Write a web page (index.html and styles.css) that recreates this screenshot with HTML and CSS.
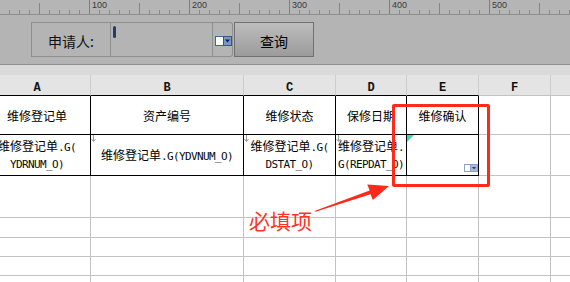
FILE: index.html
```html
<!DOCTYPE html>
<html lang="zh">
<head>
<meta charset="utf-8">
<link rel="stylesheet" href="styles.css">
</head>
<body>
<div class="ruler">
  <div class="seg"></div>
  <div class="seg"><span class="rl">100</span></div>
  <div class="seg"><span class="rl">200</span></div>
  <div class="seg"><span class="rl">300</span></div>
  <div class="seg"><span class="rl">400</span></div>
  <div class="seg"><span class="rl">500</span></div>
  <div class="seg"></div>
</div>
<div class="toolbar">
  <div class="field-label">申请人:</div>
  <div class="field-input"><span class="caret"></span></div>
  <div class="dd">
    <svg width="17" height="10" viewBox="0 0 17 10"><rect x="0.5" y="0.5" width="8" height="9" fill="#fff" stroke="#44659a"/><rect x="8.5" y="0.5" width="8" height="9" fill="#7b98c2" stroke="#34568a"/><path d="M10 3.5h5l-2.5 3z" fill="#0d1f5c"/></svg>
  </div>
  <button class="btn">查询</button>
</div>
<div class="band"></div>
<div class="sheet">
  <div class="ch bk">A</div>
  <div class="ch bk">B</div>
  <div class="ch bk">C</div>
  <div class="ch bk">D</div>
  <div class="ch bk">E</div>
  <div class="ch">F</div>
  <div class="ch"></div>

  <div class="c b"><span class="t">维修登记单</span></div>
  <div class="c b"><span class="t">资产编号</span></div>
  <div class="c b"><span class="t">维修状态</span></div>
  <div class="c b"><span class="t">保修日期</span></div>
  <div class="c b"><span class="t">维修确认</span></div>
  <div class="c"></div>
  <div class="c"></div>

  <div class="c b"><span class="t">维修登记单<span class="m">.G(</span><br><span class="m">YDRNUM_O)</span></span></div>
  <div class="c b"><svg class="mark" width="5" height="7" viewBox="0 0 5 7"><path d="M2.5 0v6M0.5 4l2 2.5 2-2.5" fill="none" stroke="#9a9a9a"/></svg><span class="t">维修登记单<span class="m">.G(YDVNUM_O)</span></span></div>
  <div class="c b"><svg class="mark" width="5" height="7" viewBox="0 0 5 7"><path d="M2.5 0v6M0.5 4l2 2.5 2-2.5" fill="none" stroke="#9a9a9a"/></svg><span class="t">维修登记单<span class="m">.G(</span><br><span class="m">DSTAT_O)</span></span></div>
  <div class="c b"><svg class="mark" width="5" height="7" viewBox="0 0 5 7"><path d="M2.5 0v6M0.5 4l2 2.5 2-2.5" fill="none" stroke="#9a9a9a"/></svg><span class="t">维修登记单<span class="m">.</span><br><span class="m">G(REPDAT_O)</span></span></div>
  <div class="c b">
    <span class="tri"></span>
    <svg class="ddmini" width="14" height="8" viewBox="0 0 14 8"><rect x="0.5" y="0.5" width="6" height="7" fill="#fff" stroke="#8aa2c6"/><rect x="6.5" y="0.5" width="7" height="7" fill="#a9bbd8" stroke="#8aa2c6"/><path d="M8 3h4l-2 2.5z" fill="#2c3f70"/></svg>
  </div>
  <div class="c"></div>
  <div class="c"></div>

  <div class="c"></div><div class="c"></div><div class="c"></div><div class="c"></div><div class="c"></div><div class="c"></div><div class="c"></div>
  <div class="c"></div><div class="c"></div><div class="c"></div><div class="c"></div><div class="c"></div><div class="c"></div><div class="c"></div>
  <div class="c"></div><div class="c"></div><div class="c"></div><div class="c"></div><div class="c"></div><div class="c"></div><div class="c"></div>
  <div class="c"></div><div class="c"></div><div class="c"></div><div class="c"></div><div class="c"></div><div class="c"></div><div class="c"></div>
  <div class="c"></div><div class="c"></div><div class="c"></div><div class="c"></div><div class="c"></div><div class="c"></div><div class="c"></div>
</div>

<div class="redbox"></div>
<svg class="arrow" width="570" height="282" viewBox="0 0 570 282"><polygon points="314.5,211 369.6,190.6 367.3,184.4 389,186 372.8,200 370.6,194.2 315.5,211.8" fill="#ff2a1a"/></svg>
<div class="note">必填项</div>
</body>
</html>
```

FILE: styles.css
```css
html, body {
  margin: 0;
  padding: 0;
}
body {
  width: 570px;
  height: 282px;
  overflow: hidden;
  background: #fff;
  font-family: "Noto Sans CJK SC", "Liberation Sans", sans-serif;
  color: #000;
  position: relative;
}

/* ruler */
.ruler {
  display: flex;
  margin-left: -10px;
  height: 14px;
  border-bottom: 1px solid #8e8e8e;
  background: #b5b5b5;
  overflow: hidden;
}
.seg {
  flex: 0 0 100px;
  box-sizing: border-box;
  height: 14px;
  border-right: 1px solid #7e7e7e;
  background-image:
    linear-gradient(#858585, #858585),
    repeating-linear-gradient(to right, transparent 0 9px, #8a8a8a 9px 10px);
  background-size: 1px 11px, 100% 4px;
  background-position: 49px 100%, 0 100%;
  background-repeat: no-repeat;
}
.rl {
  display: block;
  padding-left: 2px;
  font-family: "Liberation Sans", sans-serif;
  font-size: 9px;
  line-height: 10px;
  color: #3a3a3a;
}

/* toolbar */
.toolbar {
  display: flex;
  align-items: flex-start;
  height: 50px;
  box-sizing: border-box;
  padding: 7px 0 0 31px;
  background: #b4b4b4;
  border-bottom: 1px solid #8f8f8f;
}
.field-label {
  width: 80px;
  height: 35px;
  box-sizing: border-box;
  border: 1px solid #8f8f8f;
  display: flex;
  align-items: center;
  justify-content: center;
  padding-top: 2px;
  font-size: 14px;
  line-height: 16px;
  color: #111;
}
.field-input {
  width: 102px;
  height: 35px;
  box-sizing: border-box;
  border: 1px solid #8f8f8f;
  border-left: none;
  padding: 3px 0 0 2px;
}
.caret {
  display: block;
  width: 3px;
  height: 12px;
  border-radius: 1.5px;
  background: #1d3f6c;
}
.dd {
  width: 20px;
  height: 35px;
  box-sizing: border-box;
  border: 1px solid #8f8f8f;
  border-left: none;
  border-radius: 0 3px 3px 0;
  display: flex;
  align-items: center;
  justify-content: center;
  padding: 3px 0 0 1px;
}
.btn {
  margin: 0 0 0 1px;
  width: 80px;
  height: 35px;
  box-sizing: border-box;
  border: 1px solid #717171;
  background: linear-gradient(#bdbdbd, #9b9b9b);
  font-family: "Noto Sans CJK SC", sans-serif;
  font-size: 14px;
  line-height: 16px;
  padding: 2px 0 0 0;
  color: #000;
}

.band {
  height: 10px;
  background: #dadada;
}

/* sheet */
.sheet {
  display: grid;
  margin-left: -16px;
  grid-template-columns: 107px 153px 92px 71px 72px 72px 60px;
  grid-template-rows: 21px 39px 41px 42px 20px 19px 19px 19px;
}
.ch, .c {
  box-sizing: border-box;
  border-right: 1px solid #c3c3c3;
  border-bottom: 1px solid #c3c3c3;
  position: relative;
}
.ch {
  background: #e4e4e4;
  border-right-color: #cdcdcd;
  font-family: "Liberation Mono", monospace;
  font-weight: bold;
  font-size: 12px;
  line-height: 12px;
  padding-top: 7px;
  text-align: center;
  color: #111;
}
.ch.bk {
  border-bottom-color: #000;
}
.c {
  display: flex;
  align-items: center;
  justify-content: center;
  text-align: center;
  font-size: 12px;
  line-height: 15px;
  color: #000;
}
.t {
  display: block;
  white-space: nowrap;
}
.c.b {
  border-right-color: #000;
  border-bottom-color: #000;
}
.m {
  font-family: "DejaVu Sans Mono", monospace;
  font-size: 11px;
  letter-spacing: -0.62px;
  color: #0a0a0a;
}
.mark {
  position: absolute;
  left: 0;
  top: 0;
}
.tri {
  position: absolute;
  left: 0;
  top: 0;
  width: 0;
  height: 0;
  border-top: 7px solid #3fdcb4;
  border-right: 7px solid transparent;
}
.ddmini {
  position: absolute;
  right: 0;
  bottom: 3px;
}

/* annotations */
.redbox {
  position: absolute;
  left: 392px;
  top: 104px;
  width: 98px;
  height: 83px;
  box-sizing: border-box;
  border: 3px solid #ff2a1a;
  border-radius: 2px;
}
.arrow {
  position: absolute;
  left: 0;
  top: 0;
}
.note {
  position: absolute;
  left: 249px;
  top: 208px;
  font-size: 21px;
  line-height: 24px;
  color: #ff3424;
}
```
